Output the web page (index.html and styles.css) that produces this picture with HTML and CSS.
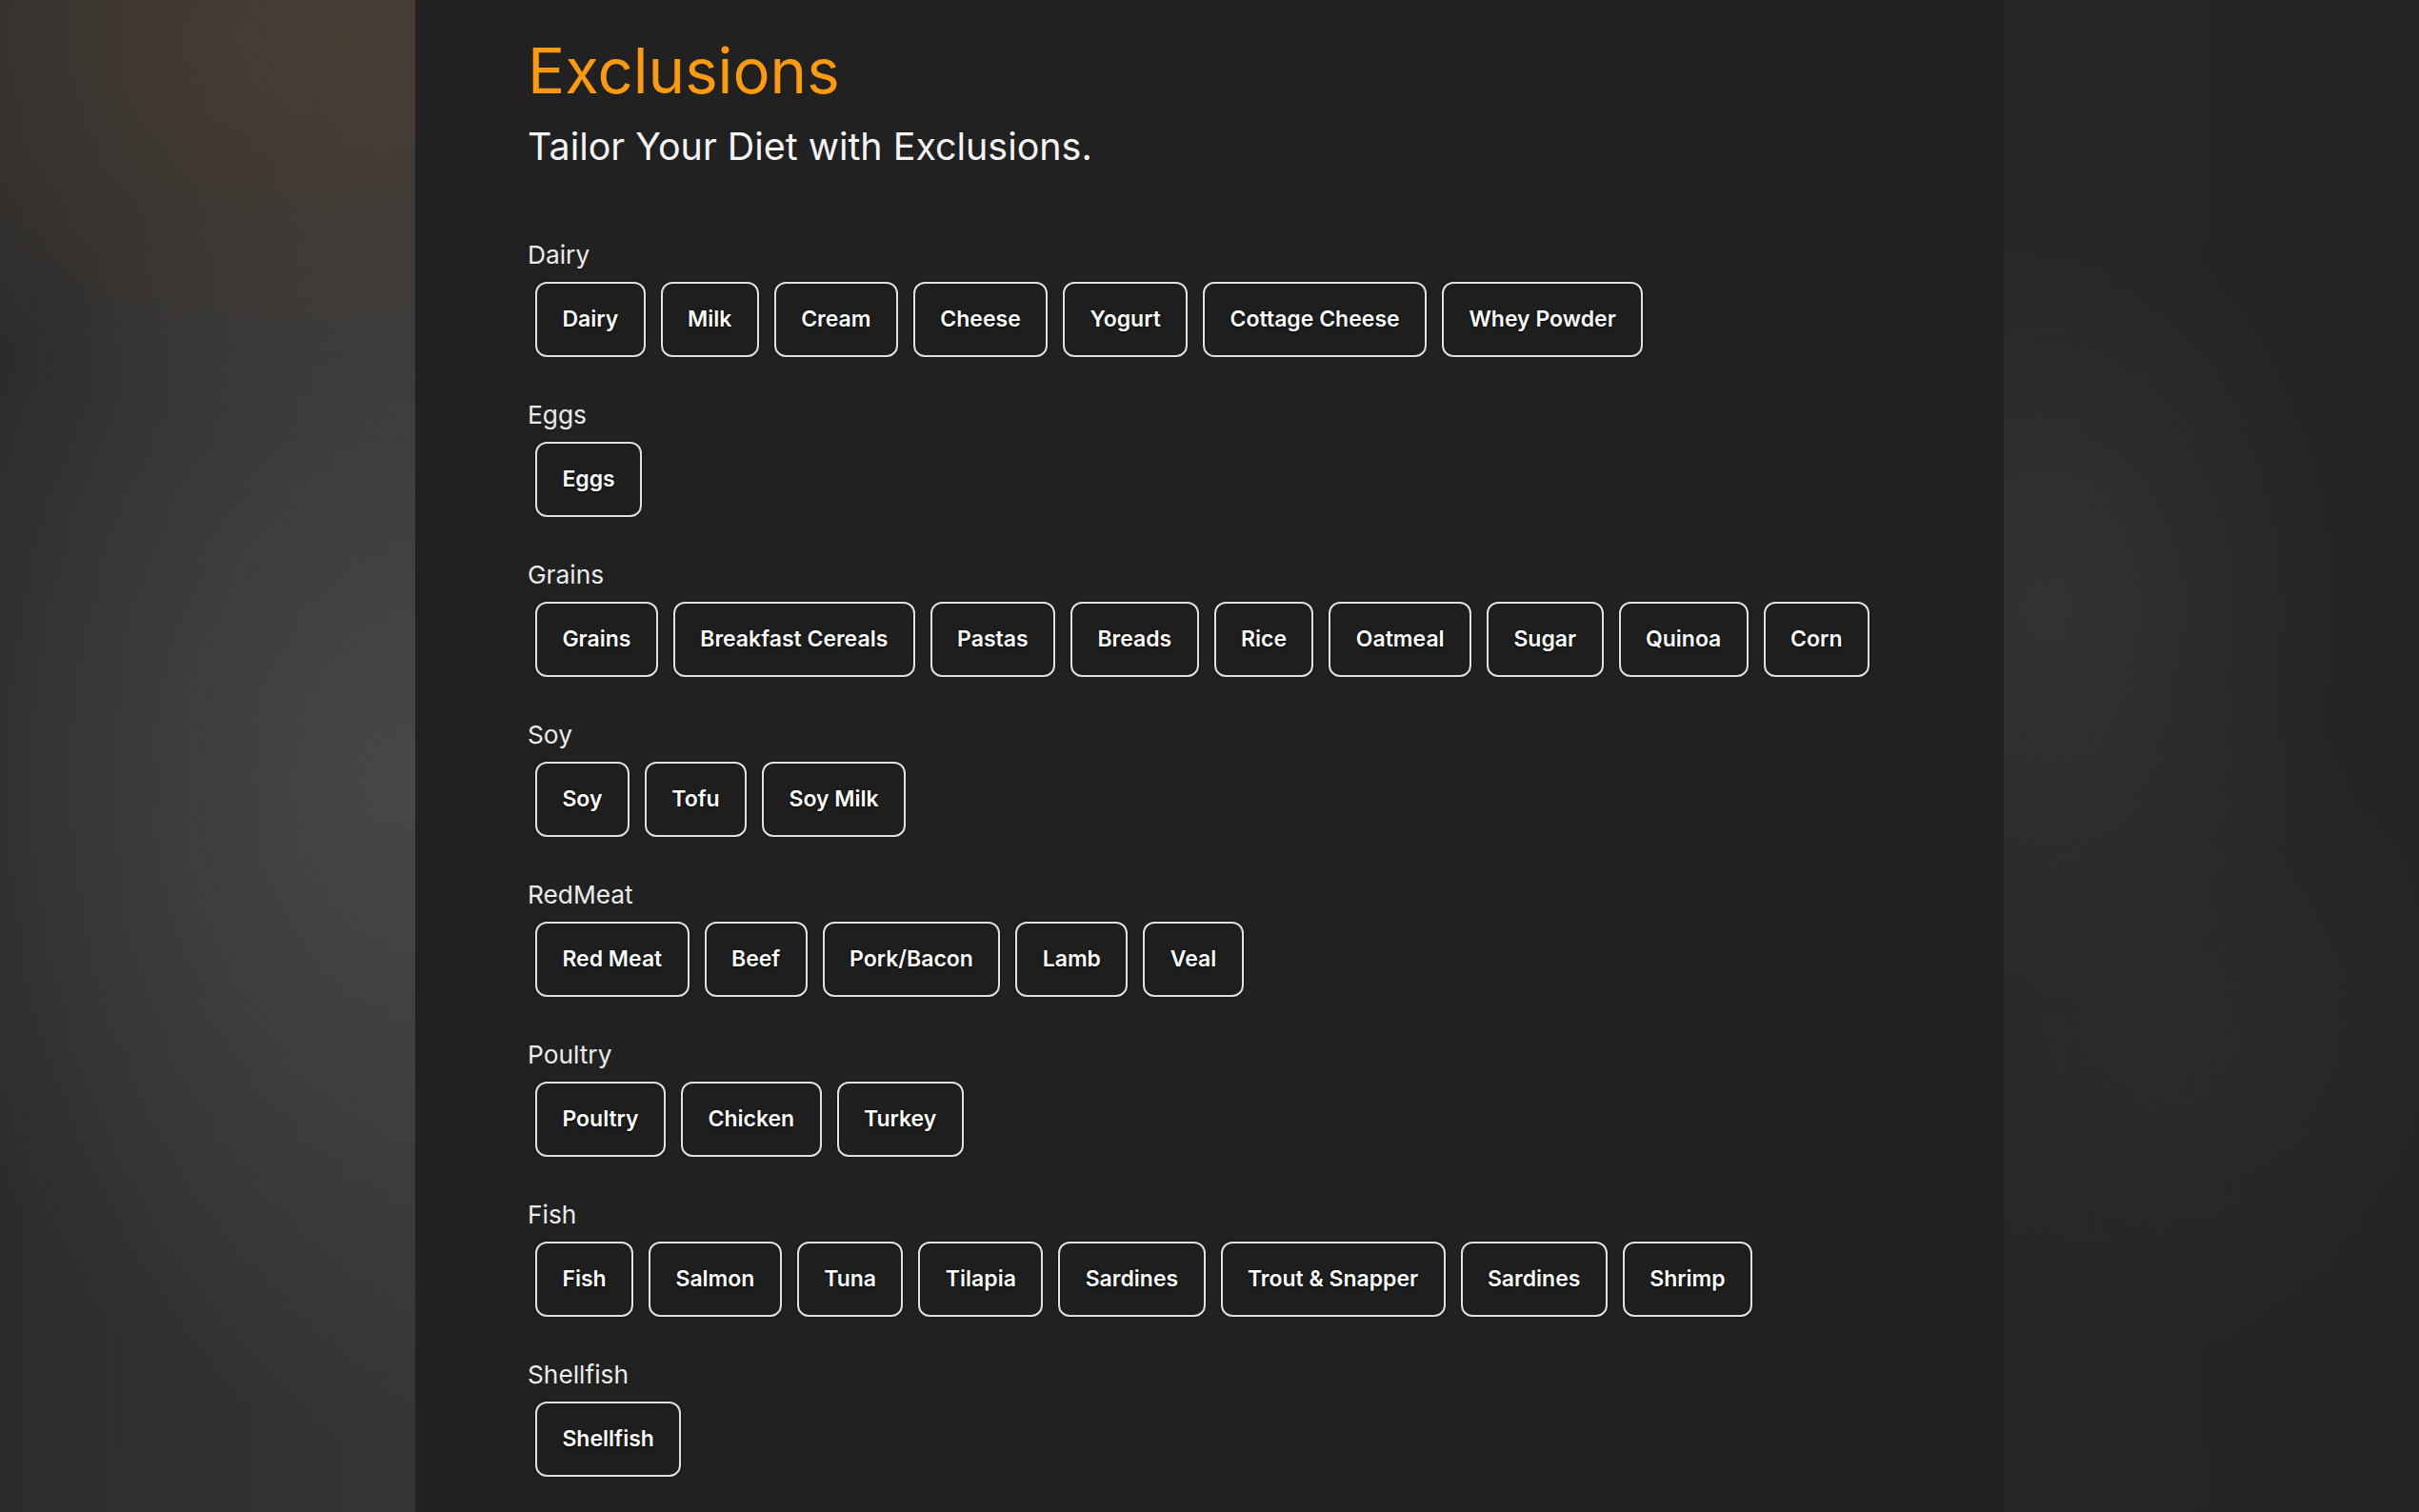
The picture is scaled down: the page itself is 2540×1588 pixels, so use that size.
FILE: index.html
```html
<!DOCTYPE html>
<html lang="en">
<head>
<meta charset="utf-8">
<title>Exclusions</title>
<link rel="stylesheet" href="styles.css">
</head>
<body>
<main class="panel">
  <header class="header">
    <h1 class="title">Exclusions</h1>
    <p class="subtitle">Tailor Your Diet with Exclusions.</p>
  </header>
  <div class="groups">
    <section class="group">
      <div class="group-label">Dairy</div>
      <div class="chips">
        <button class="chip">Dairy</button><button class="chip">Milk</button><button class="chip">Cream</button><button class="chip">Cheese</button><button class="chip">Yogurt</button><button class="chip">Cottage Cheese</button><button class="chip">Whey Powder</button>
      </div>
    </section>
    <section class="group">
      <div class="group-label">Eggs</div>
      <div class="chips">
        <button class="chip">Eggs</button>
      </div>
    </section>
    <section class="group">
      <div class="group-label">Grains</div>
      <div class="chips">
        <button class="chip">Grains</button><button class="chip">Breakfast Cereals</button><button class="chip">Pastas</button><button class="chip">Breads</button><button class="chip">Rice</button><button class="chip">Oatmeal</button><button class="chip">Sugar</button><button class="chip">Quinoa</button><button class="chip">Corn</button>
      </div>
    </section>
    <section class="group">
      <div class="group-label">Soy</div>
      <div class="chips">
        <button class="chip">Soy</button><button class="chip">Tofu</button><button class="chip">Soy Milk</button>
      </div>
    </section>
    <section class="group">
      <div class="group-label">RedMeat</div>
      <div class="chips">
        <button class="chip">Red Meat</button><button class="chip">Beef</button><button class="chip">Pork/Bacon</button><button class="chip">Lamb</button><button class="chip">Veal</button>
      </div>
    </section>
    <section class="group">
      <div class="group-label">Poultry</div>
      <div class="chips">
        <button class="chip">Poultry</button><button class="chip">Chicken</button><button class="chip">Turkey</button>
      </div>
    </section>
    <section class="group">
      <div class="group-label">Fish</div>
      <div class="chips">
        <button class="chip">Fish</button><button class="chip">Salmon</button><button class="chip">Tuna</button><button class="chip">Tilapia</button><button class="chip">Sardines</button><button class="chip">Trout &amp; Snapper</button><button class="chip">Sardines</button><button class="chip">Shrimp</button>
      </div>
    </section>
    <section class="group">
      <div class="group-label">Shellfish</div>
      <div class="chips">
        <button class="chip">Shellfish</button>
      </div>
    </section>
  </div>
</main>
</body>
</html>
```

FILE: styles.css
```css
html, body {
  margin: 0;
  height: 100%;
  overflow: hidden;
}

body {
  font-family: Inter, "Noto Sans", "Liberation Sans", sans-serif;
  display: flex;
  justify-content: center;
  background-color: #292929;
  background-image:
    radial-gradient(320px 420px at 2150px 640px, rgba(52,52,52,0.9), rgba(52,52,52,0)),
    radial-gradient(circle 360px at 2270px 1060px, rgba(44,44,44,0.9), rgba(44,44,44,0)),
    radial-gradient(ellipse 520px 700px at 420px 820px, #474747, rgba(71,71,71,0)),
    radial-gradient(ellipse 560px 420px at 360px 40px, rgba(74,62,52,0.95), rgba(74,62,52,0)),
    linear-gradient(90deg, #2c2c2c 0px, #353535 436px, #262626 2104px, #232323 2540px);
}

.panel {
  width: 1668px;
  flex: none;
  box-sizing: border-box;
  height: 100%;
  background: #212121;
  padding: 35px 118px 0 118px;
}

.header {
  display: flex;
  flex-direction: column;
}

.title {
  margin: 0;
  font-size: 65.3px;
  font-weight: 400;
  line-height: 1.21;
  color: #fb9a0e;
}

.subtitle {
  margin: 17px 0 0;
  font-size: 39.4px;
  font-weight: 400;
  line-height: 1.21;
  color: #f4f4f4;
}

.groups {
  margin-top: 73.5px;
  display: flex;
  flex-direction: column;
  gap: 45.2px;
}

.group {
  display: flex;
  flex-direction: column;
  gap: 12px;
}

.group-label {
  font-size: 26.3px;
  line-height: 1.21;
  color: #ececec;
}

.chips {
  display: flex;
  flex-wrap: wrap;
  gap: 16px;
  margin-left: 8px;
}

.chip {
  box-sizing: border-box;
  height: 79px;
  padding: 0 26.4px;
  border: 2px solid #e0e0e0;
  border-radius: 12px;
  background: #1e1e1e;
  color: #ffffff;
  font-family: Inter, "Noto Sans", "Liberation Sans", sans-serif;
  font-size: 23px;
  font-weight: 600;
  text-shadow: 0 1px 2px rgba(0,0,0,0.95), 0 0 1px rgba(0,0,0,0.8);
  box-shadow: 0 0 2px rgba(0,0,0,0.9);
  cursor: pointer;
}
```
